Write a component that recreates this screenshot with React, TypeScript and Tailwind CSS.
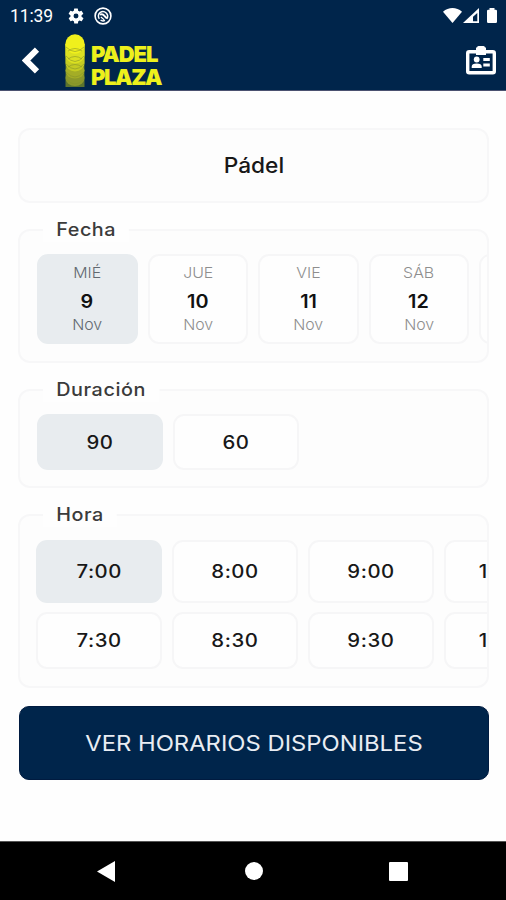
import type { ReactNode } from "react";

const days = [
  { day: "MIÉ", date: "9", month: "Nov" },
  { day: "JUE", date: "10", month: "Nov" },
  { day: "VIE", date: "11", month: "Nov" },
  { day: "SÁB", date: "12", month: "Nov" },
];

const onHour = ["7:00", "8:00", "9:00", "10:00"];
const halfHour = ["7:30", "8:30", "9:30", "10:30"];

function StatusBar() {
  return (
    <div className="flex h-[31px] items-center pl-[10px] pr-[8px] text-white">
      <span className="w-[48px] whitespace-nowrap font-['Roboto'] text-[17.500px] leading-5 tracking-[-0.100px]">11:39</span>
      <svg className="ml-[9px] h-[18px] w-[18px]" viewBox="0 0 24 24" fill="currentColor">
        <path d="M19.4 13a7.8 7.8 0 0 0 0-2l2.1-1.6a.5.5 0 0 0 .1-.7l-2-3.4a.5.5 0 0 0-.6-.2l-2.5 1a7 7 0 0 0-1.7-1L14.500 2.400A.5.5 0 0 0 14 2h-4a.5.5 0 0 0-.5.4l-.4 2.700a7 7 0 0 0-1.700 1l-2.500-1a.5.5 0 0 0-.6.2l-2 3.400a.5.5 0 0 0 .1.700L4.600 11a7.800 7.800 0 0 0 0 2l-2.100 1.600a.5.5 0 0 0-.1.700l2 3.400c.1.2.4.3.6.2l2.500-1a7 7 0 0 0 1.700 1l.4 2.700c0 .2.200.4.5.4h4c.2 0 .5-.2.500-.4l.4-2.700a7 7 0 0 0 1.700-1l2.500 1c.2.1.5 0 .6-.2l2-3.400a.5.5 0 0 0-.1-.700ZM12 15.300a3.300 3.300 0 1 1 0-6.600 3.300 3.300 0 0 1 0 6.600Z" />
      </svg>
      <svg className="ml-[9px] h-[18px] w-[18px]" viewBox="0 0 18 18" fill="none" stroke="currentColor">
        <circle cx="9" cy="9" r="7.900" strokeWidth="1.600" />
        <path d="M5.300 11.900a4.700 4.700 0 0 1 1-6.600 4.700 4.700 0 0 1 6.500 6.500M6.600 13.200a4.700 4.700 0 0 0 4.400.2" strokeWidth="1.500" />
        <path d="M6 7.600c2-.9 3.300-.2 4.200 1l2.600 2.800" strokeWidth="2" />
        <path d="M6.800 10l3.400 2.800" strokeWidth="1.200" />
      </svg>
      <svg className="ml-auto h-[17px] w-[55px]" viewBox="0 0 55 17">
        <path d="M0 4.700C5.500-.1 13.500-.1 19 4.700L9.500 16Z" fill="#fff" />
        <path d="M36 1v15H20Z" fill="#fff" />
        <path d="M34.300 6v8.300H30V9.700Z" fill="#00254b" />
        <path d="M46.500 1h5v1.800h1.200q1.300 0 1.300 1.300v10.600q0 1.300-1.300 1.300h-7.400q-1.300 0-1.300-1.300V4.100q0-1.300 1.300-1.300h1.200Z" fill="#fff" />
      </svg>
    </div>
  );
}

function BallTrail() {
  return (
    <svg className="ml-[25px] h-[54px] w-[20px]" viewBox="0 0 20 54">
      <rect x="0.500" y="10" width="19" height="43" fill="#5c742e" />
      <ellipse cx="10" cy="44" rx="9.500" ry="8" fill="#8b982a" />
      <ellipse cx="10" cy="36.500" rx="9.500" ry="8" fill="#a4ad26" />
      <path d="M.5 10h19v19a9.500 8.500 0 0 1-19 0Z" fill="#c4cb22" />
      <path d="M.5 10h19v11a9.500 8.500 0 0 1-19 0Z" fill="#dbe021" />
      <circle cx="10" cy="10" r="9.700" fill="#f0f01c" />
      <path
        d="M1 13q9 9 18 0M1 22q9 11 18 0M1 30q9 10 18 0M1 38q9 10 18 0M1 45q9 10 18 0M3 17q7-5 14 0M3 25q7-5 14 0M3 33q7-5 14 0"
        fill="none"
        stroke="#82902a"
        strokeOpacity="0.700"
        strokeWidth="0.800"
      />
    </svg>
  );
}

function AppBar() {
  return (
    <div className="flex h-[59px] items-start pl-[22px] pr-[10px] pt-[3px] text-white">
      <svg className="mt-[13px] h-[27px] w-[18px]" viewBox="0 0 18 27" fill="none" stroke="currentColor" strokeWidth="6">
        <path d="M15 2.700 4 13.500 15 24.300" />
      </svg>
      <BallTrail />
      <div className="ml-[6px] pt-[9px] font-['Inter'] text-[22px] font-black leading-[23px] text-[#edf01c]">
        <div className="tracking-[-1.100px]">PADEL</div>
        <div className="tracking-[-1.400px]">PLAZA</div>
      </div>
      <svg className="ml-auto mt-[12px] h-[29px] w-[30px]" viewBox="0 0 30 29">
        <rect x="1.700" y="5.700" width="26.600" height="21" rx="1.500" fill="none" stroke="#fff" strokeWidth="3.400" />
        <path d="M12.500 0h5q1.500 0 1.500 1.500H20V9H10V1.500h1Q11 0 12.500 0Z" fill="#fff" />
        <circle cx="10.700" cy="13.500" r="2.900" fill="#fff" />
        <path d="M5.700 22v-1.500q0-3 5-3t5 3V22ZM17.300 12h6.500v3h-6.500ZM17.300 17.500h6.500v3h-6.500Z" fill="#fff" />
      </svg>
    </div>
  );
}

function Section({ title, className, children }: { title: string; className: string; children: ReactNode }) {
  return (
    <section className={`rounded-[12px] border-2 border-[#f7f7f8] bg-[#fdfdfd] ${className}`}>
      <h2 className="-mt-[13px] ml-[23px] w-fit origin-left scale-x-[1.100] bg-[#fefefe] px-[12px] text-[18px] font-medium leading-6 tracking-[0.500px] text-[#3b3b3b]">
        {title}
      </h2>
      {children}
    </section>
  );
}

function Option({ label, selected, className }: { label: string; selected?: boolean; className: string }) {
  return (
    <button
      className={`flex w-[126px] shrink-0 items-center justify-center rounded-[11px] text-[18px] font-medium tracking-[0.500px] text-[#181818] ${
        selected ? "bg-[#e8ecef]" : "border-2 border-[#f6f6f7] bg-[#fefefe]"
      } ${className}`}
    >
      <span className="scale-x-[1.130]">{label}</span>
    </button>
  );
}

export default function App() {
  return (
    <div className="flex h-[900px] w-[506px] flex-col overflow-hidden bg-[#fefefe] font-['Inter',sans-serif]">
      <header className="h-[91px] shrink-0 border-b border-[#4b5270] bg-[#00254b]">
        <StatusBar />
        <AppBar />
      </header>

      <main className="flex flex-1 flex-col pl-[18px] pr-[17px] pt-[37px]">
        <div className="flex h-[75px] shrink-0 items-center justify-center rounded-[12px] border-2 border-[#f7f7f8] bg-[#fdfdfd] text-[21px] font-medium text-[#181818]">
          <span className="scale-x-[1.080]">Pádel</span>
        </div>

        <Section title="Fecha" className="mt-[26px] h-[134px]">
          <div className="mt-[12px] flex gap-[10px] overflow-hidden pl-[17px]">
            {days.map((d, i) => (
              <button
                key={d.date}
                className={`flex h-[90px] w-[100.500px] shrink-0 flex-col items-center rounded-[11px] border-2 ${
                  i === 0 ? "border-[#e8ecef] bg-[#e8ecef] text-[#626970]" : "border-[#f6f6f7] bg-[#fefefe] text-[#8e8e8e]"
                }`}
              >
                <span className="mt-[7px] scale-x-[1.060] text-[15px] font-light leading-5">{d.day}</span>
                <span className="mt-[9px] scale-x-[1.100] text-[18px] font-semibold leading-5 text-[#111]">{d.date}</span>
                <span className="mt-[3px] scale-x-[1.060] text-[15px] font-light leading-5">{d.month}</span>
              </button>
            ))}
            <div className="h-[90px] w-[100.500px] shrink-0 rounded-[11px] border-2 border-[#f6f6f7] bg-[#fefefe]" />
          </div>
        </Section>

        <Section title="Duración" className="mt-[26px] h-[99px]">
          <div className="mt-[12px] flex gap-[10px] pl-[17px]">
            <Option label="90" selected className="h-[56px]" />
            <Option label="60" className="h-[56px]" />
          </div>
        </Section>

        <Section title="Hora" className="mt-[26px] h-[174px]">
          <div className="mt-[13px] flex flex-col gap-[9px] overflow-hidden pl-[16px]">
            <div className="flex gap-[10px]">
              {onHour.map((h, i) => (
                <Option key={h} label={h} selected={i === 0} className="h-[63px]" />
              ))}
            </div>
            <div className="flex gap-[10px]">
              {halfHour.map((h) => (
                <Option key={h} label={h} className="h-[57px]" />
              ))}
            </div>
          </div>
        </Section>

        <button className="mt-[18px] ml-px flex h-[74px] shrink-0 items-center justify-center rounded-[10px] border border-[#001b40] bg-[#00254b] text-[22px] leading-7 text-[#e9edf3]">
          <span className="scale-x-[1.082]">VER HORARIOS DISPONIBLES</span>
        </button>
      </main>

      <nav className="flex h-[59px] shrink-0 items-center border-t border-[#555] bg-black pl-[97px]">
        <svg className="h-[21px] w-[18px]" viewBox="0 0 18 22" preserveAspectRatio="none" fill="#fff">
          <path d="M18 0v22L0 11Z" />
        </svg>
        <div className="ml-[129.500px] h-[18px] w-[18px] rounded-full bg-white" />
        <div className="ml-[126.500px] h-[19px] w-[19px] rounded-[1px] bg-white" />
      </nav>
    </div>
  );
}
